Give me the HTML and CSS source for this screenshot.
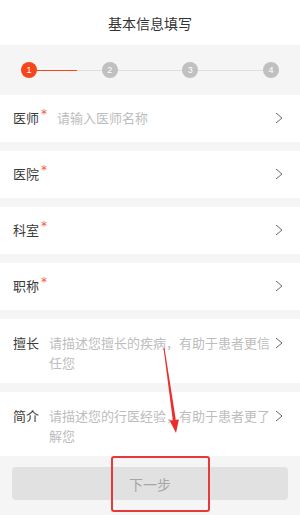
FILE: index.html
```html
<!DOCTYPE html>
<html lang="zh-CN">
<head>
    <meta charset="UTF-8">
    <meta name="viewport" content="width=device-width, initial-scale=1.0">
    <title>基本信息填写</title>
    <link rel="stylesheet" href="styles.css">
</head>
<body>
    <div class="page">
        <div class="nav-bar">基本信息填写</div>
        <div class="steps">
            <div class="step active">1</div>
            <div class="step-line"><div class="step-line-fill"></div></div>
            <div class="step">2</div>
            <div class="step-line"></div>
            <div class="step">3</div>
            <div class="step-line"></div>
            <div class="step">4</div>
        </div>
        <div class="form">
            <div class="row">
                <div class="label">医师<span class="required">*</span></div>
                <div class="value placeholder">请输入医师名称</div>
                <svg class="chevron" viewBox="0 0 8 12"><path d="M1 1 L7 6 L1 11" /></svg>
            </div>
            <div class="row">
                <div class="label">医院<span class="required">*</span></div>
                <div class="value"></div>
                <svg class="chevron" viewBox="0 0 8 12"><path d="M1 1 L7 6 L1 11" /></svg>
            </div>
            <div class="row">
                <div class="label">科室<span class="required">*</span></div>
                <div class="value"></div>
                <svg class="chevron" viewBox="0 0 8 12"><path d="M1 1 L7 6 L1 11" /></svg>
            </div>
            <div class="row">
                <div class="label">职称<span class="required">*</span></div>
                <div class="value"></div>
                <svg class="chevron" viewBox="0 0 8 12"><path d="M1 1 L7 6 L1 11" /></svg>
            </div>
            <div class="row row-multi">
                <div class="label">擅长</div>
                <div class="value placeholder">请描述您擅长的疾病，有助于患者更信任您</div>
                <svg class="chevron" viewBox="0 0 8 12"><path d="M1 1 L7 6 L1 11" /></svg>
            </div>
            <div class="row row-multi last">
                <div class="label">简介</div>
                <div class="value placeholder">请描述您的行医经验，有助于患者更了解您</div>
                <svg class="chevron" viewBox="0 0 8 12"><path d="M1 1 L7 6 L1 11" /></svg>
            </div>
        </div>
        <div class="footer">
            <button type="button" class="next-button" disabled>下一步</button>
        </div>

        <!-- annotation drawn on top of the screenshot -->
        <svg class="annotation" viewBox="0 0 300 515">
            <polygon points="163.5,348 164.5,348 175.8,419.8 172.8,420.2" fill="#ec2d2d" />
            <polygon points="169.6,420.6 178.9,419.4 176,433" fill="#ec2d2d" />
            <rect x="112" y="457" width="97" height="54" rx="2" fill="none" stroke="#e5393c" stroke-width="2" />
        </svg>
    </div>
</body>
</html>
```

FILE: styles.css
```css
body {
    font-family: "Noto Sans CJK SC", "Noto Sans", sans-serif;
    background-color: #f5f5f5;
    color: #333;
    margin: 0;
}
.page {
    position: relative;
    width: 300px;
    height: 515px;
    overflow: hidden;
    background-color: #f5f5f5;
}
.nav-bar {
    height: 45px;
    line-height: 46px;
    background-color: #ffffff;
    text-align: center;
    font-size: 14px;
    color: #333;
}
.steps {
    height: 50px;
    padding: 0 21px;
    display: flex;
    align-items: center;
}
.step {
    width: 16px;
    height: 16px;
    border-radius: 50%;
    background-color: #c0c0c0;
    color: #ffffff;
    font-family: "Liberation Sans", sans-serif;
    font-size: 9px;
    line-height: 16px;
    text-align: center;
    flex-shrink: 0;
}
.step.active {
    background-color: #f5451d;
}
.step-line {
    flex: 1;
    height: 1px;
    background-color: #dedede;
}
.step-line-fill {
    width: 40px;
    height: 1px;
    background-color: #f5451d;
}
.row {
    display: flex;
    align-items: flex-start;
    background-color: #ffffff;
    padding: 13px 17px 13px 13px;
    margin-bottom: 9px;
    font-size: 13px;
    line-height: 20px;
}
.row-multi {
    padding-top: 14px;
    padding-bottom: 10px;
    margin-top: 1px;
}
.row.last {
    margin-bottom: 0;
}
.label {
    color: #3a3a3a;
    margin-right: 10px;
    white-space: nowrap;
}
.required {
    color: #f25a3a;
    font-family: "DejaVu Sans", sans-serif;
    font-size: 12px;
    margin-left: 2px;
    position: relative;
    top: -5px;
}
.value {
    flex: 1;
}
.placeholder {
    color: #bdbdbd;
}
.chevron {
    width: 8px;
    height: 12px;
    margin-top: 4px;
    margin-left: 3px;
    flex-shrink: 0;
}
.chevron path {
    fill: none;
    stroke: #666;
    stroke-width: 1;
}
.footer {
    padding: 11px 12px;
}
.next-button {
    width: 100%;
    height: 33px;
    border: none;
    border-radius: 4px;
    background-color: #e1e1e1;
    color: #a6a6a6;
    font-family: "Noto Sans CJK SC", sans-serif;
    font-size: 14px;
}
.annotation {
    position: absolute;
    top: 0;
    left: 0;
    width: 300px;
    height: 515px;
    pointer-events: none;
}
```
